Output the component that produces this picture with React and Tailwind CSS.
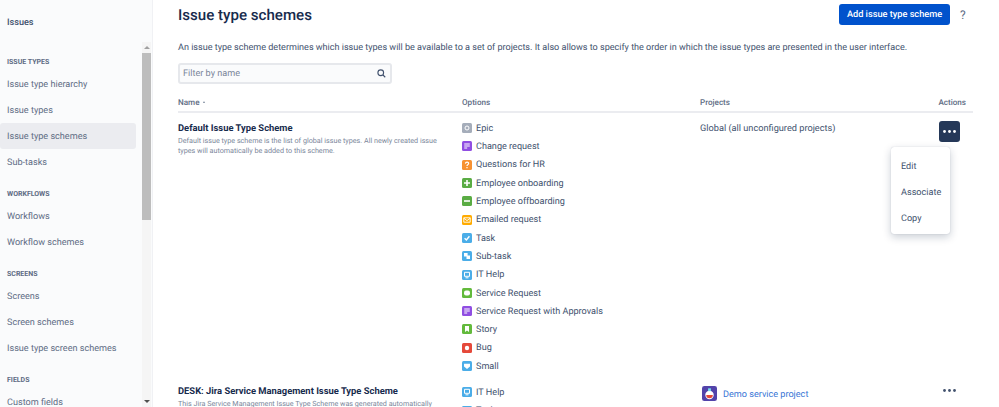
import React from "react";

const font = { fontFamily: 'Roboto, "Noto Sans", sans-serif' };

function IssueIcon({ type }) {
  const colors = {
    epic: "#A5ADBA", purple: "#904EE2", question: "#F79232", plus: "#5AAC44", minus: "#5AAC44",
    mail: "#FFAB00", task: "#4BADE8", sub: "#4BADE8", it: "#4BADE8", service: "#63BA3C",
    story: "#63BA3C", bug: "#E5493A", small: "#4BADE8",
  };
  return (
    <svg width="10" height="10" viewBox="0 0 10 10" className="shrink-0">
      <rect width="10" height="10" rx="1.5" fill={colors[type]} />
      {type === "epic" && <circle cx="5" cy="5" r="2" fill="none" stroke="#fff" strokeWidth="1" />}
      {type === "purple" && <path d="M2.2 3h5.6M2.2 5h5.6M2.2 7h3" stroke="#fff" strokeWidth="1.2" />}
      {type === "question" && <path d="M3.4 3.6C3.6 1.6 6.8 1.8 6.6 3.6 6.5 4.7 5 4.6 5 6M5 7v1.2" fill="none" stroke="#fff" strokeWidth="1.2" />}
      {type === "plus" && <path d="M2 5h6M5 2v6" stroke="#fff" strokeWidth="1.6" />}
      {type === "minus" && <path d="M2 5h6" stroke="#fff" strokeWidth="1.6" />}
      {type === "mail" && <path d="M1.8 2.8h6.4v4.4H1.8zM1.8 3.2 5 5.6l3.2-2.4" fill="none" stroke="#fff" strokeWidth="0.9" />}
      {type === "task" && <path d="M2.6 5.2 4.4 7l3-3.8" fill="none" stroke="#fff" strokeWidth="1.4" />}
      {type === "sub" && <path d="M2 2h3.6v3.6H2zM4.5 4.5H8V8H4.5z" fill="#fff" />}
      {type === "it" && <path d="M2.5 2.3h5v4h-5zM3.5 7.8h3" fill="none" stroke="#fff" strokeWidth="1" />}
      {type === "service" && <rect x="2" y="2.5" width="6" height="5" rx="2" fill="#fff" />}
      {type === "story" && <path d="M3 2h4v6L5 6.6 3 8z" fill="#fff" />}
      {type === "bug" && <circle cx="5" cy="5" r="2.2" fill="#fff" />}
      {type === "small" && <path d="M2 2.8h6v2.6L5 8 2 5.4z" fill="#fff" />}
    </svg>
  );
}

function Option({ type, label }) {
  return (
    <div className="flex h-[18.3px] items-center gap-[4px] text-[#42526E] text-[9.1px]">
      <IssueIcon type={type} />
      <span className="pt-[3px]">{label}</span>
    </div>
  );
}

function NavItem({ label, active }) {
  return (
    <div className={`flex h-[26px] items-center rounded-[3px] pt-[3px] pl-[7px] text-[9.1px] text-[#5E6C84] ${active ? "bg-[#EBECF0]" : ""}`}>
      {label}
    </div>
  );
}

function NavHeading({ label }) {
  return (
    <div className="flex h-[14px] items-center pl-[7px] text-[7px] font-bold text-[#5E6C84] uppercase">{label}</div>
  );
}

const options = [
  ["epic", "Epic"], ["purple", "Change request"], ["question", "Questions for HR"], ["plus", "Employee onboarding"],
  ["minus", "Employee offboarding"], ["mail", "Emailed request"], ["task", "Task"], ["sub", "Sub-task"],
  ["it", "IT Help"], ["service", "Service Request"], ["purple", "Service Request with Approvals"], ["story", "Story"],
  ["bug", "Bug"], ["small", "Small"],
];

function Dots({ color }) {
  return (
    <svg width="13" height="3" viewBox="0 0 13 3">
      <circle cx="1.5" cy="1.5" r="1.4" fill={color} />
      <circle cx="6.5" cy="1.5" r="1.4" fill={color} />
      <circle cx="11.5" cy="1.5" r="1.4" fill={color} />
    </svg>
  );
}

export default function App() {
  return (
    <div style={font} className="flex h-[407px] w-[999px] overflow-hidden bg-white [text-rendering:geometricPrecision]">
      <aside className="flex h-full w-[153px] shrink-0 flex-col overflow-hidden border-r border-[#F0F1F4] bg-[#FAFBFC]">
        <div className="flex h-[42px] shrink-0 items-center pt-[5px] pl-[7px] text-[9.1px] font-medium text-[#42526E]">Issues</div>
        <div className="flex min-h-0 flex-1">
          <nav className="w-[136px] shrink-0 pt-[13px]">
            <NavHeading label="Issue types" />
            <div className="mt-[2px]" />
            <NavItem label="Issue type hierarchy" />
            <NavItem label="Issue types" />
            <NavItem label="Issue type schemes" active />
            <NavItem label="Sub-tasks" />
            <div className="mt-[12px]" />
            <NavHeading label="Workflows" />
            <div className="mt-[2px]" />
            <NavItem label="Workflows" />
            <NavItem label="Workflow schemes" />
            <div className="mt-[12px]" />
            <NavHeading label="Screens" />
            <div className="mt-[2px]" />
            <NavItem label="Screens" />
            <NavItem label="Screen schemes" />
            <NavItem label="Issue type screen schemes" />
            <div className="mt-[12px]" />
            <NavHeading label="Fields" />
            <div className="mt-[2px]" />
            <NavItem label="Custom fields" />
          </nav>
          <div className="ml-[6px] flex w-[9px] shrink-0 flex-col items-center bg-[#F5F5F5]">
            <div className="flex h-[11px] shrink-0 items-center justify-center">
              <div className="h-0 w-0 border-x-[3px] border-b-[3px] border-x-transparent border-b-[#A0A0A0]" />
            </div>
            <div className="h-[167px] w-full shrink-0 bg-[#BDBDBD]" />
            <div className="flex-1" />
            <div className="flex h-[11px] shrink-0 items-center justify-center">
              <div className="h-0 w-0 border-x-[3px] border-t-[3px] border-x-transparent border-t-[#505050]" />
            </div>
          </div>
        </div>
      </aside>

      <main className="relative min-w-0 flex-1 pl-[25px] pr-[26px]">
        <div className="flex h-[27px] items-center justify-between pt-[2px]">
          <h1 className="mt-[2px] text-[15.1px] leading-none font-medium text-[#172B4D]">Issue type schemes</h1>
          <div className="mr-[3px] flex items-center">
            <div className="flex h-[21px] w-[111px] items-center justify-center rounded-[3px] bg-[#0052CC] text-[9.2px] font-medium whitespace-nowrap text-white">
              Add issue type scheme
            </div>
            <span className="ml-[10px] w-[10px] text-[12px] text-[#5E6C84]">?</span>
          </div>
        </div>
        <p className="mt-[12px] text-[9.05px] leading-[18px] whitespace-nowrap text-[#42526E]">
          An issue type scheme determines which issue types will be available to a set of projects. It also allows to specify the order in which the issue types are presented in the user interface.
        </p>
        <div className="mt-[6px] flex h-[21px] w-[214px] items-center justify-between rounded-[3px] border-2 border-[#E6E8EC] bg-[#FAFBFC] pr-[4px] pl-[3px] text-[9.1px] text-[#7A869A]">
          <span className="pt-[3px]">Filter by name</span>
          <svg width="9" height="9" viewBox="0 0 12 12" fill="none" stroke="#42526E" strokeWidth="1.5">
            <circle cx="5" cy="5" r="3.8" />
            <path d="M8 8l3 3" />
          </svg>
        </div>

        <div className="mt-[12px] grid h-[17px] grid-cols-[284px_238px_1fr_auto] items-center border-b-2 border-[#EBECF0] pb-[3px] text-[8.1px] font-medium text-[#5E6C84]">
          <div className="flex items-center gap-[3px]">
            Name
            <span className="h-0 w-0 border-x-[1.5px] border-b-[2px] border-x-transparent border-b-[#7A869A]" />
          </div>
          <div>Options</div>
          <div>Projects</div>
          <div className="pr-[7px]">Actions</div>
        </div>

        <div className="grid grid-cols-[284px_238px_1fr_auto] pt-[6px]">
          <div className="pr-[24px]">
            <div className="mt-[1px] text-[9.4px] leading-[18px] font-bold text-[#172B4D]">Default Issue Type Scheme</div>
            <div className="mt-[-2px] text-[7.2px] leading-[9.5px] text-[#7A869A]">
              Default issue type scheme is the list of global issue types. All newly created issue types will automatically be added to this scheme.
            </div>
          </div>
          <div>
            {options.map(([t, l], i) => (
              <Option key={i} type={t} label={l} />
            ))}
          </div>
          <div className="mt-[1px] text-[9.2px] leading-[18px] text-[#42526E]">Global (all unconfigured projects)</div>
          <div className="flex w-[37px] justify-end pt-[2px] pr-[13px]">
            <div className="flex h-[21px] w-[21px] items-center justify-center rounded-[3px] bg-[#253858]">
              <Dots color="#fff" />
            </div>
          </div>
        </div>

        <div className="mt-[8px] grid grid-cols-[284px_238px_1fr_auto]">
          <div>
            <div className="text-[9.4px] leading-[18px] font-bold text-[#172B4D]">DESK: Jira Service Management Issue Type Scheme</div>
            <div className="mt-[-2px] text-[7.2px] leading-[9.5px] whitespace-nowrap text-[#7A869A]">
              This Jira Service Management Issue Type Scheme was generated automatically
            </div>
          </div>
          <div>
            <Option type="it" label="IT Help" />
            <Option type="task" label="Task" />
          </div>
          <div className="flex items-start gap-[6px] pt-[3px] pl-[2px]">
            <svg width="15" height="15" viewBox="0 0 16 16" className="shrink-0">
              <rect width="16" height="16" rx="2.5" fill="#5243AA" />
              <circle cx="8" cy="9.5" r="4.5" fill="#fff" />
              <path d="M4.5 9.5h7a3.5 3.5 0 0 1-7 0z" fill="#E5493A" />
              <rect x="6.5" y="2.5" width="3" height="3" fill="#79E2F2" />
            </svg>
            <span className="text-[9.1px] leading-[18px] text-[#0052CC] opacity-80">Demo service project</span>
          </div>
          <div className="flex w-[37px] justify-end pt-[6px] pr-[17px]">
            <Dots color="#42526E" />
          </div>
        </div>

        <div className="absolute top-[147px] left-[738px] flex h-[87px] w-[59px] flex-col justify-center rounded-[3px] bg-white pt-[6px] pl-[10px] text-[9.1px] text-[#42526E] shadow-[0_3px_8px_rgba(9,30,66,0.22),0_0_1px_rgba(9,30,66,0.25)]">
          <div className="flex h-[26px] items-center">Edit</div>
          <div className="flex h-[26px] items-center">Associate</div>
          <div className="flex h-[26px] items-center">Copy</div>
        </div>
      </main>
    </div>
  );
}
